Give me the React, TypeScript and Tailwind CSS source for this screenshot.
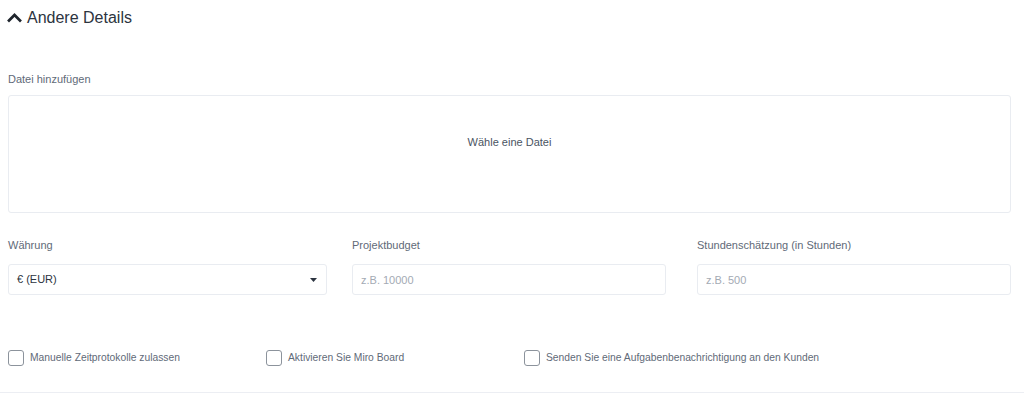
import { useState } from 'react';

const labelCls = 'block text-[11px] text-[#5f6a78] leading-[14px]';
const inputCls =
  'h-[31px] border border-[#e9ecf1] rounded-[3px] px-[8px] text-[11px] text-[#2c3440] placeholder:text-[#a3aab4] outline-none bg-white';

function Checkbox({ label }: { label: string }) {
  const [checked, setChecked] = useState(false);
  return (
    <label className="flex items-center gap-[6px] cursor-pointer">
      <span
        onClick={() => setChecked(!checked)}
        className={`w-[16px] h-[16px] rounded-[3px] border border-[#8c939c] ${checked ? 'bg-[#2c3440]' : 'bg-white'}`}
      />
      <span className="text-[10.3px] text-[#5f6a78] leading-[14px]">{label}</span>
    </label>
  );
}

export default function App() {
  return (
    <div className="w-[1024px] h-[399px] bg-white overflow-hidden" style={{ fontFamily: '"Liberation Sans", Arial, sans-serif' }}>
      {/* Section header */}
      <div className="flex items-center gap-[5px] pl-[7px] pt-[6px] h-[30px]">
        <svg width="15" height="14" viewBox="0 0 15 14" className="mt-[-2px]">
          <path d="M2 10.5 L7.5 5 L13 10.5" fill="none" stroke="#1f252d" strokeWidth="2.7" strokeLinecap="square" />
        </svg>
        <span className="text-[16px] text-[#2c3440] leading-[20px]">Andere Details</span>
      </div>

      <div className="px-[8px] pr-[13px]">
        {/* File upload */}
        <div className="mt-[42px]">
          <span className={`${labelCls} mb-[9px]`}>Datei hinzufügen</span>
          <div className="h-[118px] border border-[#e9ecf1] rounded-[3px] flex items-center justify-center">
            <span className="text-[11px] text-[#4a5462] mt-[-24px]">Wähle eine Datei</span>
          </div>
        </div>

        {/* Inputs */}
        <div className="grid grid-cols-[344px_345px_1fr] mt-[25px]">
          <div>
            <span className={`${labelCls} mb-[12px]`}>Währung</span>
            <div className={`${inputCls} w-[319px] flex items-center justify-between`}>
              <span>€ (EUR)</span>
              <svg width="7" height="4" viewBox="0 0 7 4" className="mr-[1px]">
                <path d="M0 0 H7 L3.5 4 Z" fill="#2c3440" />
              </svg>
            </div>
          </div>
          <div>
            <span className={`${labelCls} mb-[12px]`}>Projektbudget</span>
            <input className={`${inputCls} w-[314px]`} placeholder="z.B. 10000" />
          </div>
          <div>
            <span className={`${labelCls} mb-[12px]`}>Stundenschätzung (in Stunden)</span>
            <input className={`${inputCls} w-full`} placeholder="z.B. 500" />
          </div>
        </div>

        {/* Checkboxes */}
        <div className="grid grid-cols-[258px_258px_1fr] mt-[55px]">
          <Checkbox label="Manuelle Zeitprotokolle zulassen" />
          <Checkbox label="Aktivieren Sie Miro Board" />
          <Checkbox label="Senden Sie eine Aufgabenbenachrichtigung an den Kunden" />
        </div>
      </div>

      <div className="mt-[26px] border-t border-[#eceef3]" />
    </div>
  );
}
